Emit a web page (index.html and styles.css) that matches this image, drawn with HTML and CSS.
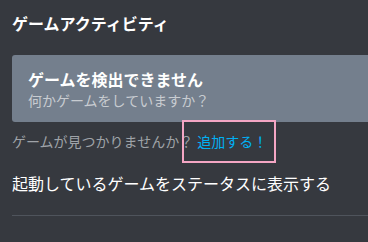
FILE: index.html
```html
<!DOCTYPE html>
<html lang="ja">
<head>
<meta charset="utf-8">
<link rel="stylesheet" href="styles.css">
</head>
<body>
<div class="page">
  <h2 class="title">ゲームアクティビティ</h2>
  <div class="card">
    <div class="card-head">ゲームを検出できません</div>
    <div class="card-sub">何かゲームをしていますか？</div>
  </div>
  <div class="hint">ゲームが見つかりませんか？<span class="link">追加する！<span class="mark"></span></span></div>
  <div class="toggle">起動しているゲームをステータスに表示する</div>
  <div class="divider"></div>
</div>
</body>
</html>
```
FILE: styles.css
```css
html, body {
  margin: 0;
  padding: 0;
  background: #36393f;
}
body {
  font-family: "Noto Sans CJK JP", "Noto Sans", sans-serif;
  width: 368px;
  height: 242px;
  overflow: hidden;
}
.page {
  padding: 13px 0 0 12px;
}
.title {
  margin: 0;
  font-size: 16px;
  line-height: 20px;
  font-weight: 700;
  color: #ffffff;
}
.card {
  margin-top: 22px;
  background: #747f8d;
  border-radius: 3px 0 0 3px;
  padding: 14px 16px 12px 16px;
}
.card-head {
  font-size: 16px;
  line-height: 20px;
  font-weight: 700;
  color: #ffffff;
}
.card-sub {
  margin-top: 1px;
  font-size: 14px;
  line-height: 20px;
  color: #c8ccd1;
}
.hint {
  margin-top: 9px;
  font-size: 14px;
  line-height: 20px;
  color: #9fa3a8;
}
.link {
  position: relative;
  color: #00b0f4;
  margin-left: 4px;
}
.mark {
  position: absolute;
  left: -15px;
  top: -11px;
  width: 90px;
  height: 39px;
  border: 2px solid #f4a6c4;
}
.toggle {
  margin-top: 22px;
  font-size: 16px;
  line-height: 20px;
  color: #ffffff;
}
.divider {
  margin-top: 22px;
  height: 1px;
  background: #4f545c;
}
```
